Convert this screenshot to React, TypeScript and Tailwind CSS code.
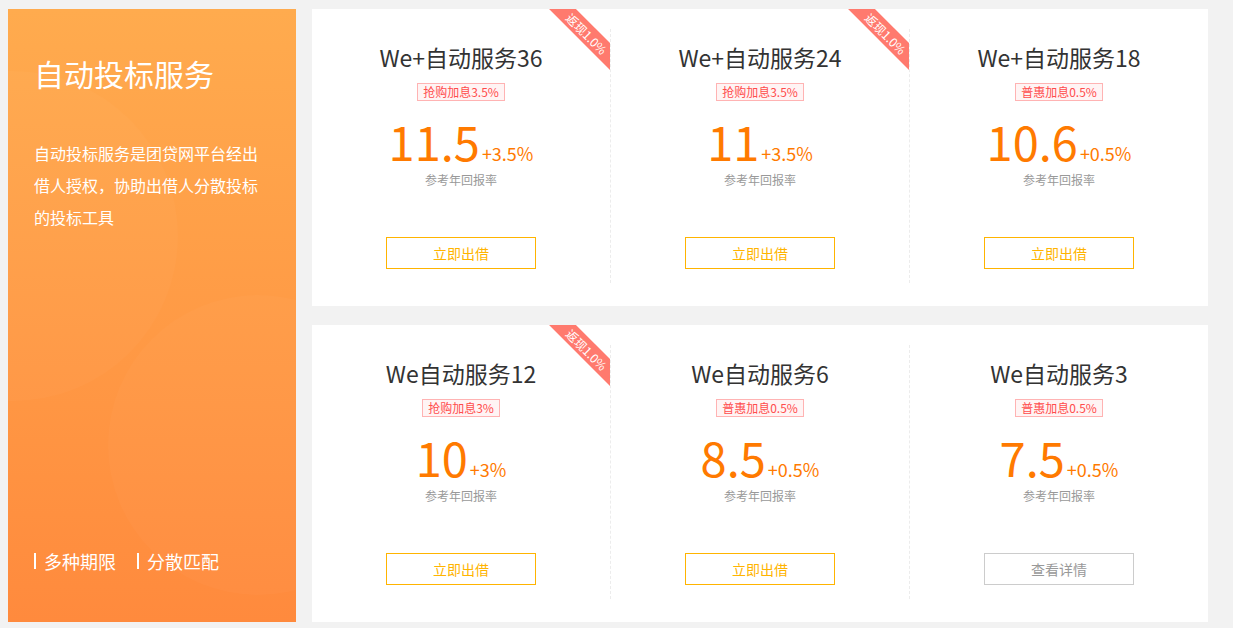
import React from "react";

type Product = {
  name: string;
  tag: string;
  rate: string;
  extra: string;
  cashback?: boolean;
  soldOut?: boolean;
};

const rows: Product[][] = [
  [
    { name: "We+自动服务36", tag: "抢购加息3.5%", rate: "11.5", extra: "+3.5%", cashback: true },
    { name: "We+自动服务24", tag: "抢购加息3.5%", rate: "11", extra: "+3.5%", cashback: true },
    { name: "We+自动服务18", tag: "普惠加息0.5%", rate: "10.6", extra: "+0.5%" },
  ],
  [
    { name: "We自动服务12", tag: "抢购加息3%", rate: "10", extra: "+3%", cashback: true },
    { name: "We自动服务6", tag: "普惠加息0.5%", rate: "8.5", extra: "+0.5%" },
    { name: "We自动服务3", tag: "普惠加息0.5%", rate: "7.5", extra: "+0.5%", soldOut: true },
  ],
];

const font = { fontFamily: '"Noto Sans CJK SC", "Noto Sans", sans-serif' };

export default function App() {
  return (
    <div className="min-h-[628px] w-full bg-[#f2f2f2]" style={font}>
      <div className="ml-2 flex w-[1200px] gap-4 pt-[9px]">
        {/* Left intro panel */}
        <div className="relative flex h-[613px] w-[288px] shrink-0 flex-col overflow-hidden bg-gradient-to-b from-[#ffab4e] to-[#ff8a3d] pl-[26px] text-white">
          <div className="absolute -left-[160px] top-[62px] h-[330px] w-[330px] rounded-full bg-white/[0.025]" />
          <div className="absolute left-[100px] top-[286px] h-[300px] w-[300px] rounded-full bg-white/[0.025]" />

          <h2 className="relative mt-[44px] text-[30px] font-normal leading-[40px]">自动投标服务</h2>
          <p className="relative mt-[44px] w-[232px] text-[16px] leading-[32px]">
            自动投标服务是团贷网平台经出借人授权，协助出借人分散投标的投标工具
          </p>

          <div className="relative mt-auto mb-[49px] flex items-center gap-[21px] text-[18px] leading-[24px]">
            <span className="flex items-center gap-2">
              <i className="h-4 w-[2px] bg-white" />
              多种期限
            </span>
            <span className="flex items-center gap-2">
              <i className="h-4 w-[2px] bg-white" />
              分散匹配
            </span>
          </div>
        </div>

        {/* Product cards */}
        <div className="flex flex-1 flex-col gap-[19px]">
          {rows.map((row, i) => (
            <div key={i} className="flex h-[297px] bg-white pb-[23px] pt-5">
              {row.map((p, j) => (
                <ProductColumn key={p.name} product={p} divider={j > 0} />
              ))}
            </div>
          ))}
        </div>
      </div>
    </div>
  );
}

function ProductColumn({ product, divider }: { product: Product; divider: boolean }) {
  return (
    <div
      className={`relative flex flex-1 flex-col items-center ${
        divider ? "border-l border-dashed border-[#ececec]" : ""
      }`}
    >
      {product.cashback && <Ribbon />}

      <h3 className="mt-3 text-[23px] font-normal leading-[32px] text-[#333]">{product.name}</h3>

      <span className="mt-[10px] border border-[#ffb3b3] bg-[#fff4f4] px-[5px] text-[12px] leading-4 text-[#ff4c4c]">
        {product.tag}
      </span>

      <div className="mt-[15px] flex h-[50px] items-baseline gap-[2px] text-[#ff7a00]">
        <span className="text-[47px] leading-[50px]">{product.rate}</span>
        <span className="text-[18px] leading-[20px]">{product.extra}</span>
      </div>

      <p className="mt-[6px] text-[12px] leading-4 text-[#999]">参考年回报率</p>

      {product.soldOut ? (
        <button className="mt-[49px] h-8 w-[150px] border border-[#cccccc] text-[14px] text-[#999]">
          查看详情
        </button>
      ) : (
        <button className="mt-[49px] h-8 w-[150px] border border-[#ffb400] text-[14px] text-[#ffb400]">
          立即出借
        </button>
      )}
    </div>
  );
}

function Ribbon() {
  return (
    <div className="absolute -top-5 right-0 h-[61px] w-[61px] overflow-hidden">
      <div className="absolute left-[-8px] top-[15px] flex h-[19px] w-[92px] rotate-45 items-center justify-center bg-[#ff7a6e] text-[12px] leading-none text-white">
        返现1.0%
      </div>
    </div>
  );
}
